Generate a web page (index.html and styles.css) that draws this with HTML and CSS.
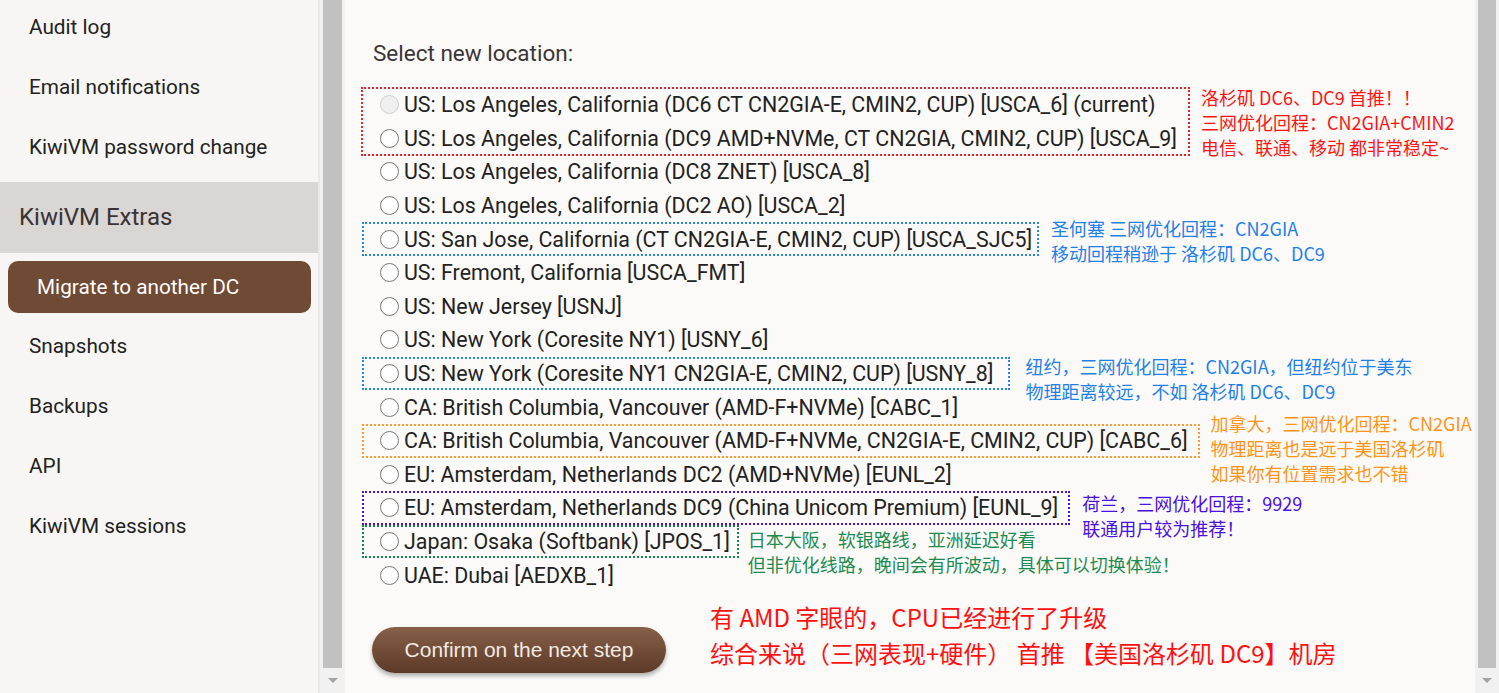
FILE: index.html
```html
<!DOCTYPE html>
<html>
	<head>
		<meta charset="utf-8">
		<title>KiwiVM - Migrate to another DC</title>
		<link rel="stylesheet" href="styles.css">
	</head>
	<body>
		<div id="page">
			<div id="sidebar">
				<a class="item">Audit log</a>
				<a class="item">Email notifications</a>
				<a class="item">KiwiVM password change</a>
				<div class="heading">KiwiVM Extras</div>
				<a class="item active">Migrate to another DC</a>
				<a class="item">Snapshots</a>
				<a class="item">Backups</a>
				<a class="item">API</a>
				<a class="item">KiwiVM sessions</a>
			</div>
			<div class="sbar left"><div class="thumb"></div><div class="arrow"></div></div>

			<div id="main">
				<p class="label">Select new location:</p>
				<div id="locations">
					<div class="group red">
						<label class="row"><input type="radio" name="loc" disabled>US: Los Angeles, California (DC6 CT CN2GIA-E, CMIN2, CUP) [USCA_6] (current)</label>
						<label class="row"><input type="radio" name="loc">US: Los Angeles, California (DC9 AMD+NVMe, CT CN2GIA, CMIN2, CUP) [USCA_9]</label>
						<div class="note">洛杉矶 DC6、DC9 首推！！<br>三网优化回程：CN2GIA+CMIN2<br>电信、联通、移动 都非常稳定~</div>
					</div>
					<label class="row"><input type="radio" name="loc">US: Los Angeles, California (DC8 ZNET) [USCA_8]</label>
					<label class="row"><input type="radio" name="loc">US: Los Angeles, California (DC2 AO) [USCA_2]</label>
					<div class="group blue">
						<label class="row"><input type="radio" name="loc">US: San Jose, California (CT CN2GIA-E, CMIN2, CUP) [USCA_SJC5]</label>
						<div class="note">圣何塞 三网优化回程：CN2GIA<br>移动回程稍逊于 洛杉矶 DC6、DC9</div>
					</div>
					<label class="row"><input type="radio" name="loc">US: Fremont, California [USCA_FMT]</label>
					<label class="row"><input type="radio" name="loc">US: New Jersey [USNJ]</label>
					<label class="row"><input type="radio" name="loc">US: New York (Coresite NY1) [USNY_6]</label>
					<div class="group ny">
						<label class="row"><input type="radio" name="loc">US: New York (Coresite NY1 CN2GIA-E, CMIN2, CUP) [USNY_8]</label>
						<div class="note">纽约，三网优化回程：CN2GIA，但纽约位于美东<br>物理距离较远，不如 洛杉矶 DC6、DC9</div>
					</div>
					<label class="row"><input type="radio" name="loc">CA: British Columbia, Vancouver (AMD-F+NVMe) [CABC_1]</label>
					<div class="group orange">
						<label class="row"><input type="radio" name="loc">CA: British Columbia, Vancouver (AMD-F+NVMe, CN2GIA-E, CMIN2, CUP) [CABC_6]</label>
						<div class="note">加拿大，三网优化回程：CN2GIA<br>物理距离也是远于美国洛杉矶<br>如果你有位置需求也不错</div>
					</div>
					<label class="row"><input type="radio" name="loc">EU: Amsterdam, Netherlands DC2 (AMD+NVMe) [EUNL_2]</label>
					<div class="group purple">
						<label class="row"><input type="radio" name="loc">EU: Amsterdam, Netherlands DC9 (China Unicom Premium) [EUNL_9]</label>
						<div class="note">荷兰，三网优化回程：9929<br>联通用户较为推荐！</div>
					</div>
					<div class="group green">
						<label class="row"><input type="radio" name="loc">Japan: Osaka (Softbank) [JPOS_1]</label>
						<div class="note">日本大阪，软银路线，亚洲延迟好看<br>但非优化线路，晚间会有所波动，具体可以切换体验！</div>
					</div>
					<label class="row"><input type="radio" name="loc">UAE: Dubai [AEDXB_1]</label>
				</div>

				<div class="bottom">
					<button class="confirm">Confirm on the next step</button>
					<div class="summary">有 AMD 字眼的，CPU已经进行了升级<br>综合来说（三网表现+硬件） 首推 【美国洛杉矶 DC9】机房</div>
				</div>
			</div>
			<div class="sbar right"><div class="thumb"></div><div class="arrow"></div></div>
		</div>
	</body>
</html>
```

FILE: styles.css
```css
*{
	margin:0px;
	padding:0px;
	box-sizing:border-box;
}
html, body{
	height:100%;
	overflow:hidden;
}
body{
	background-color:#fbfaf9;
	font-family:Roboto, "Noto Sans", sans-serif;
	color:#222;
}
#page{
	display:flex;
	height:693px;
}

/* left menu */
#sidebar{
	width:320px;
	flex:none;
	background-color:#f7f6f4;
	border-right:2px solid #e9e8e6;
	margin-top:-3px;
	display:flex;
	flex-direction:column;
}
#sidebar .item{
	display:block;
	height:60px;
	line-height:60px;
	padding-left:29px;
	font-size:20.75px;
	color:#222;
	white-space:nowrap;
}
#sidebar .heading{
	margin-top:5px;
	height:71px;
	line-height:71px;
	padding-left:19px;
	font-size:24px;
	color:#3a3333;
	background-color:#d9d6d3;
}
#sidebar .item.active{
	margin:8px 7px 3px 8px;
	height:52px;
	line-height:52px;
	border-radius:10px;
	background-color:#6f4a34;
	color:#fff;
}

/* scrollbars */
.sbar{
	flex:none;
	width:25px;
	background-color:#f1f1f1;
	display:flex;
	flex-direction:column;
}
.sbar.right{
	width:24px;
}
.sbar .thumb{
	flex:1;
	margin:0px 3px;
	background-color:#c1c1c1;
}
.sbar .arrow{
	height:25px;
	display:flex;
	justify-content:center;
	align-items:center;
}
.sbar .arrow:after{
	content:"";
	border-left:5px solid transparent;
	border-right:5px solid transparent;
	border-top:5px solid #a3a3a3;
}

/* content */
#main{
	flex:1;
	padding:38px 0px 0px 28px;
	background-color:#fbfaf9;
}
.label{
	font-size:22.5px;
	line-height:30px;
	color:#3a3535;
	margin-bottom:20px;
}
.row{
	display:flex;
	align-items:center;
	height:33.6px;
	font-size:21.4px;
	white-space:nowrap;
}
#locations > .row{
	padding-left:7px;
}
.row input{
	-webkit-appearance:none;
	appearance:none;
	width:19px;
	height:19px;
	margin-right:5px;
	border:1px solid #777;
	border-radius:50%;
	background-color:#fff;
	flex:none;
}
.row input:disabled{
	border-color:#cfcfcf;
	background-color:#efefef;
}

/* dotted boxes drawn round some rows */
.group{
	position:relative;
	width:fit-content;
	margin-left:-11px;
	padding-left:18px;
	padding-right:12px;
	outline:2px dotted;
	outline-offset:-2px;
}
.group .note{
	position:absolute;
	left:calc(100% + 12px);
	font-family:"Noto Sans CJK SC", sans-serif;
	font-size:18px;
	line-height:25px;
	white-space:nowrap;
}
.red{ outline-color:#e8232b; outline-offset:-1px; padding-right:12px; }
.red .note{ color:#ff1414; top:-3px; }
.blue{ outline-color:#2a86e6; padding-right:7px; }
.blue .note{ color:#1f80e8; top:-6px; }
.ny{ outline-color:#2a86e6; padding-right:17px; }
.ny .note{ color:#1f80e8; top:-3px; left:calc(100% + 15px); }
.orange{ outline-color:#ff9a2e; }
.orange .note{ color:#ff9418; top:-13px; left:calc(100% + 11px); }
.purple{ outline-color:#4a14e6; }
.purple .note{ color:#4a10e0; top:0px; }
.green{ outline-color:#1c8050; padding-right:9px; }
.green .note{ color:#1f8a50; top:2px; left:calc(100% + 9px); }

/* bottom part */
.bottom{
	display:flex;
	align-items:flex-start;
	margin-top:7px;
}
.confirm{
	margin-top:28px;
	margin-left:-1px;
	width:294px;
	height:46px;
	border:none;
	border-radius:23px;
	background:linear-gradient(#876049, #5c3a28);
	box-shadow:0px 3px 4px rgba(0,0,0,0.3);
	color:#f2ebe3;
	font-family:"Liberation Sans", Arial, sans-serif;
	font-size:21px;
}
.summary{
	margin-left:44px;
	font-family:"Noto Sans CJK SC", sans-serif;
	font-size:24px;
	line-height:36px;
	color:#ff1010;
	white-space:nowrap;
}
```
